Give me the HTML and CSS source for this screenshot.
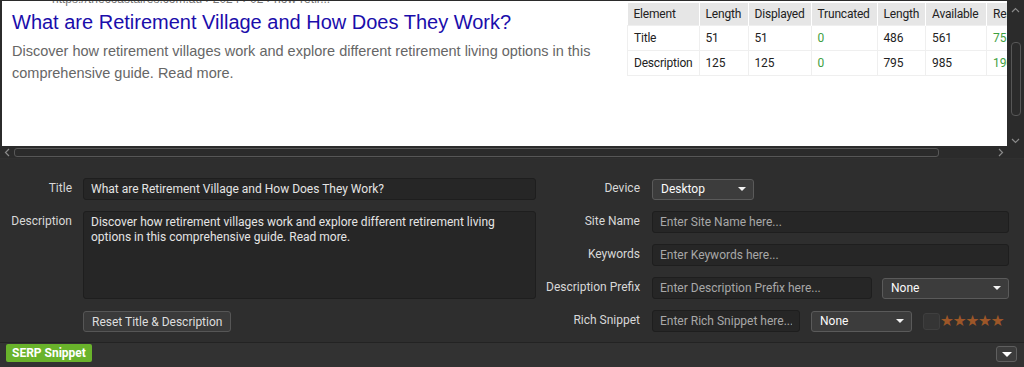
FILE: index.html
```html
<!DOCTYPE html>
<html lang="en">
<head>
  <meta charset="utf-8">
  <title>SERP Snippet</title>
  <link rel="stylesheet" href="styles.css">
</head>
<body>
  <div class="app">

    <div class="viewer">
      <div class="canvas">
        <div class="serp">
          <div class="serp-url">https://thecoastalres.com.au › 2024 › 02 › how-retir...</div>
          <div class="serp-title">What are Retirement Village and How Does They Work?</div>
          <div class="serp-desc">Discover how retirement villages work and explore different retirement living options in this comprehensive guide. Read more.</div>
        </div>
        <table class="stats">
          <tr>
            <th class="c-el">Element</th>
            <th class="c-len">Length</th>
            <th class="c-disp">Displayed</th>
            <th class="c-trunc">Truncated</th>
            <th class="c-px">Length</th>
            <th class="c-av">Available</th>
            <th class="c-rem">Remaining</th>
          </tr>
          <tr>
            <td>Title</td>
            <td>51</td>
            <td>51</td>
            <td class="ok">0</td>
            <td>486</td>
            <td>561</td>
            <td class="ok">75</td>
          </tr>
          <tr>
            <td>Description</td>
            <td>125</td>
            <td>125</td>
            <td class="ok">0</td>
            <td>795</td>
            <td>985</td>
            <td class="ok">190</td>
          </tr>
        </table>
      </div>
      <div class="vscroll">
        <svg class="arrow" width="9" height="6" viewBox="0 0 9 6"><path d="M1 5 L4.5 1.5 L8 5" fill="none" stroke="#8a8a8a" stroke-width="1.2"/></svg>
        <div class="vthumb"></div>
        <svg class="arrow" width="9" height="6" viewBox="0 0 9 6"><path d="M1 1 L4.5 4.5 L8 1" fill="none" stroke="#8a8a8a" stroke-width="1.2"/></svg>
      </div>
    </div>

    <div class="hscroll">
      <svg class="harrow" width="6" height="9" viewBox="0 0 6 9"><path d="M5 1 L1.5 4.5 L5 8" fill="none" stroke="#8a8a8a" stroke-width="1.2"/></svg>
      <div class="hthumb"></div>
      <svg class="harrow right" width="6" height="9" viewBox="0 0 6 9"><path d="M1 1 L4.5 4.5 L1 8" fill="none" stroke="#8a8a8a" stroke-width="1.2"/></svg>
    </div>

    <div class="editor">
      <div class="col-left">
        <label class="lbl">Title</label>
        <input class="field" type="text" value="What are Retirement Village and How Does They Work?">
        <label class="lbl">Description</label>
        <textarea class="field area">Discover how retirement villages work and explore different retirement living options in this comprehensive guide. Read more.</textarea>
        <span></span>
        <div><button class="btn">Reset Title &amp; Description</button></div>
      </div>

      <div class="col-right">
        <label class="lbl">Device</label>
        <div class="line">
          <div class="select device">Desktop<span class="caret"></span></div>
        </div>
        <label class="lbl">Site Name</label>
        <input class="field" type="text" placeholder="Enter Site Name here...">
        <label class="lbl">Keywords</label>
        <input class="field" type="text" placeholder="Enter Keywords here...">
        <label class="lbl">Description Prefix</label>
        <div class="line">
          <input class="field prefix" type="text" placeholder="Enter Description Prefix here...">
          <div class="select wide">None<span class="caret"></span></div>
        </div>
        <label class="lbl">Rich Snippet</label>
        <div class="line">
          <input class="field rich" type="text" placeholder="Enter Rich Snippet here...">
          <div class="select narrow">None<span class="caret"></span></div>
          <span class="check"></span>
          <span class="stars">★★★★★</span>
        </div>
      </div>
    </div>

    <div class="statusbar">
      <span class="badge">SERP Snippet</span>
      <span class="toggle"><span class="caret"></span></span>
    </div>

  </div>
</body>
</html>
```

FILE: styles.css
```css
body {
    margin: 0;
    background: #2d2d2d;
    font-family: Roboto, "Liberation Sans", sans-serif;
    font-size: 12px;
    color: #dcdcdc;
}

.app {
    width: 1024px;
    height: 367px;
    overflow: hidden;
    display: flex;
    flex-direction: column;
}

/* preview area */

.viewer {
    display: flex;
    height: 146px;
    background: #2b2b2b;
    padding-top: 1px;
    box-sizing: border-box;
}

.canvas {
    flex: 1;
    margin-left: 2px;
    background: #fff;
    display: flex;
    overflow: hidden;
}

.serp {
    width: 625px;
    flex: none;
    padding-left: 10px;
    box-sizing: border-box;
    font-family: "Liberation Sans", Arial, sans-serif;
}

.serp-url {
    margin-top: -10px;
    padding-left: 40px;
    font-size: 12px;
    line-height: 16px;
    color: #777;
    white-space: nowrap;
}

.serp-title {
    margin-top: 3px;
    font-size: 20px;
    line-height: 24px;
    color: #1a0dab;
    white-space: nowrap;
}

.serp-desc {
    width: 590px;
    margin-top: 6px;
    font-size: 14.5px;
    line-height: 22px;
    color: #666;
}

.stats {
    flex: none;
    margin-top: 2px;
    align-self: flex-start;
    border-collapse: collapse;
    table-layout: fixed;
    color: #222;
    font-size: 12px;
    letter-spacing: -0.2px;
    white-space: nowrap;
}

.stats th {
    background: #e6e6e6;
    font-weight: normal;
    text-align: left;
    height: 22px;
    padding: 0 6px;
    border-right: 1px solid #fff;
    overflow: hidden;
}

.stats td {
    height: 24px;
    padding: 0 6px;
    border: 1px solid #efefef;
}

.stats .ok {
    color: #3fa03f;
}

.c-el { width: 59px; }
.c-len { width: 36px; }
.c-disp { width: 50px; }
.c-trunc { width: 53px; }
.c-px { width: 35px; }
.c-av { width: 48px; }
.c-rem { width: 60px; }

.vscroll {
    width: 17px;
    flex: none;
    display: flex;
    flex-direction: column;
    align-items: center;
}

.vscroll .arrow {
    margin-top: 6px;
}

.vthumb {
    width: 8px;
    height: 72px;
    margin-top: 29px;
    margin-bottom: 16px;
    border: 1px solid #575757;
    border-radius: 4px;
}

.hscroll {
    height: 12px;
    display: flex;
    align-items: center;
    background: #2b2b2b;
    padding-left: 4px;
}

.harrow {
    flex: none;
}

.hthumb {
    width: 923px;
    height: 7px;
    margin-left: 4px;
    border: 1px solid #575757;
    border-radius: 3px;
}

.harrow.right {
    margin-left: 59px;
}

/* form area */

.editor {
    flex: 1;
    display: flex;
    gap: 10px;
    padding-top: 19px;
    background: #2e2e2e;
    border-top: 1px solid #303030;
}

.col-left {
    width: 536px;
    display: grid;
    grid-template-columns: 72px 453px;
    grid-template-rows: 21px 88px 21px;
    column-gap: 11px;
    row-gap: 12px;
}

.col-right {
    display: grid;
    grid-template-columns: 94px 357px;
    grid-auto-rows: 22px;
    column-gap: 12px;
    row-gap: 11px;
}

.lbl {
    text-align: right;
    line-height: 21px;
    color: #d8d8d8;
    white-space: nowrap;
}

.field {
    box-sizing: border-box;
    height: 22px;
    margin: 0;
    padding: 0 7px;
    background: #262626;
    border: 1px solid #1e1e1e;
    border-radius: 3px;
    color: #e4e4e4;
    font-family: Roboto, "Liberation Sans", sans-serif;
    font-size: 12px;
    outline: none;
}

.field::placeholder {
    color: #a8a8a8;
}

.area {
    height: 88px;
    padding: 3px 7px;
    line-height: 15px;
    resize: none;
}

.line {
    display: flex;
    align-items: center;
    gap: 11px;
}

.prefix {
    width: 220px;
    margin-right: -1px;
}

.rich {
    width: 148px;
}

.select {
    box-sizing: border-box;
    height: 21px;
    display: flex;
    align-items: center;
    justify-content: space-between;
    padding: 0 7px 0 8px;
    background: #3c3c3c;
    border: 1px solid #5a5a5a;
    border-radius: 3px;
    color: #fafafa;
}

.device { width: 102px; }
.wide { width: 127px; }
.narrow { width: 101px; }

.caret {
    width: 0;
    height: 0;
    border-left: 4px solid transparent;
    border-right: 4px solid transparent;
    border-top: 4px solid #f2f2f2;
}

.check {
    width: 15px;
    height: 15px;
    background: #353535;
    border: 1px solid #3f3f3f;
    border-radius: 3px;
}

.stars {
    margin-left: -11px;
    font-family: "DejaVu Sans", sans-serif;
    font-size: 15.5px;
    letter-spacing: -1.2px;
    color: #9c5628;
}

.btn {
    height: 21px;
    padding: 0 8px;
    background: #3a3a3a;
    border: 1px solid #565656;
    border-radius: 3px;
    color: #dedede;
    font-family: Roboto, "Liberation Sans", sans-serif;
    font-size: 12px;
}

/* bottom bar */

.statusbar {
    height: 23px;
    flex: none;
    display: flex;
    align-items: flex-start;
    justify-content: space-between;
    padding: 1px 7px 0 6px;
    background: #323232;
    border-top: 1px solid #232323;
}

.badge {
    padding: 0 6px;
    line-height: 18px;
    background: #69b32b;
    border-radius: 2px;
    color: #fff;
    font-weight: bold;
}

.toggle {
    width: 19px;
    height: 14px;
    margin-top: 2px;
    display: flex;
    align-items: center;
    justify-content: center;
    background: #3c3c3c;
    border: 1px solid #5f5f5f;
    border-radius: 3px;
}

.toggle .caret {
    border-top-color: #fff;
    border-left-width: 5px;
    border-right-width: 5px;
    border-top-width: 5px;
}
```
